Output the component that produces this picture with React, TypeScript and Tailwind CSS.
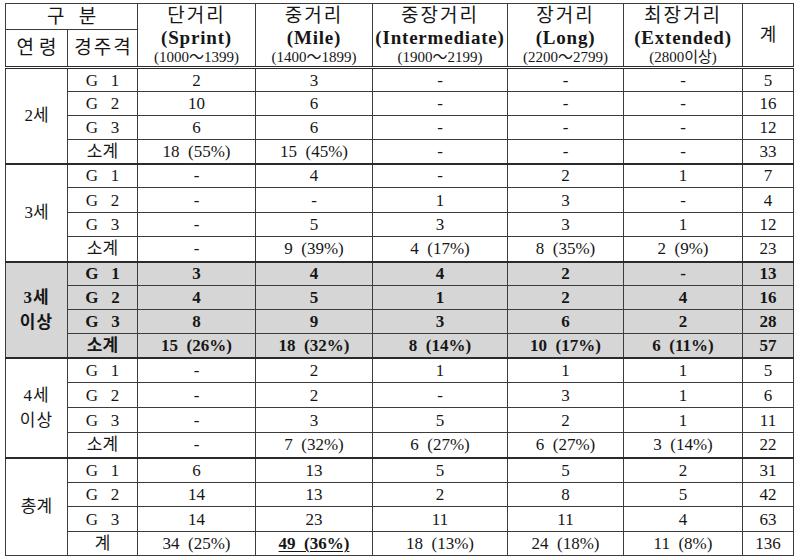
import React from "react";

type Row = { label: string; vals: string[]; total: string };
type Section = {
  age: string[];
  rows: Row[];
  heights: string[];
  bold?: boolean;
  shaded?: boolean;
};

const distances = [
  { ko: "단거리", en: "(Sprint)", range: "(1000～1399)" },
  { ko: "중거리", en: "(Mile)", range: "(1400～1899)" },
  { ko: "중장거리", en: "(Intermediate)", range: "(1900～2199)" },
  { ko: "장거리", en: "(Long)", range: "(2200～2799)" },
  { ko: "최장거리", en: "(Extended)", range: "(2800이상)" },
];

const sections: Section[] = [
  {
    age: ["2세"],
    heights: ["h-[24px]", "h-[24px]", "h-[24px]", "h-[24px]"],
    rows: [
      { label: "G   1", vals: ["2", "3", "-", "-", "-"], total: "5" },
      { label: "G   2", vals: ["10", "6", "-", "-", "-"], total: "16" },
      { label: "G   3", vals: ["6", "6", "-", "-", "-"], total: "12" },
      { label: "소계", vals: ["18  (55%)", "15  (45%)", "-", "-", "-"], total: "33" },
    ],
  },
  {
    age: ["3세"],
    heights: ["h-[24px]", "h-[25px]", "h-[24px]", "h-[25px]"],
    rows: [
      { label: "G   1", vals: ["-", "4", "-", "2", "1"], total: "7" },
      { label: "G   2", vals: ["-", "-", "1", "3", "-"], total: "4" },
      { label: "G   3", vals: ["-", "5", "3", "3", "1"], total: "12" },
      { label: "소계", vals: ["-", "9  (39%)", "4  (17%)", "8  (35%)", "2  (9%)"], total: "23" },
    ],
  },
  {
    age: ["3세", "이상"],
    bold: true,
    shaded: true,
    heights: ["h-[24px]", "h-[24px]", "h-[24px]", "h-[24px]"],
    rows: [
      { label: "G   1", vals: ["3", "4", "4", "2", "-"], total: "13" },
      { label: "G   2", vals: ["4", "5", "1", "2", "4"], total: "16" },
      { label: "G   3", vals: ["8", "9", "3", "6", "2"], total: "28" },
      { label: "소계", vals: ["15  (26%)", "18  (32%)", "8  (14%)", "10  (17%)", "6  (11%)"], total: "57" },
    ],
  },
  {
    age: ["4세", "이상"],
    heights: ["h-[25px]", "h-[25px]", "h-[25px]", "h-[25px]"],
    rows: [
      { label: "G   1", vals: ["-", "2", "1", "1", "1"], total: "5" },
      { label: "G   2", vals: ["-", "2", "-", "3", "1"], total: "6" },
      { label: "G   3", vals: ["-", "3", "5", "2", "1"], total: "11" },
      { label: "소계", vals: ["-", "7  (32%)", "6  (27%)", "6  (27%)", "3  (14%)"], total: "22" },
    ],
  },
  {
    age: ["총계"],
    heights: ["h-[25px]", "h-[24px]", "h-[25px]", "h-[24px]"],
    rows: [
      { label: "G   1", vals: ["6", "13", "5", "5", "2"], total: "31" },
      { label: "G   2", vals: ["14", "13", "2", "8", "5"], total: "42" },
      { label: "G   3", vals: ["14", "23", "11", "11", "4"], total: "63" },
      { label: "계", vals: ["34  (25%)", "49  (36%)", "18  (13%)", "24  (18%)", "11  (8%)"], total: "136" },
    ],
  },
];

const cell = "border border-[#3c3c3c] p-0 text-center align-middle whitespace-pre";

export default function App() {
  return (
    <div className="min-h-[560px] w-[800px] bg-white pl-[5px] pt-[3px] font-['Liberation_Serif','Noto_Sans_CJK_KR',serif] text-[#161616]">
      <table className="w-[788px] table-fixed border-collapse">
        <colgroup>
          <col className="w-[62px]" />
          <col className="w-[70px]" />
          <col className="w-[118px]" />
          <col className="w-[117px]" />
          <col className="w-[135px]" />
          <col className="w-[116px]" />
          <col className="w-[119px]" />
          <col className="w-[51px]" />
        </colgroup>
        <thead>
          <tr className="h-[26px]">
            <th colSpan={2} className={`${cell} text-[19px] font-normal leading-[24px]`}>
              구{"   "}분
            </th>
            {distances.map((d) => (
              <th
                key={d.ko}
                rowSpan={2}
                className={`${cell} border-b-[3px] border-b-[#2a2a2a] font-normal [border-bottom-style:double]`}
              >
                <div className="flex flex-col items-center">
                  <span className="text-[19px] leading-[23px] tracking-[2px]">{d.ko}</span>
                  <span className="text-[19px] font-bold leading-[21px] tracking-[0.8px]">{d.en}</span>
                  <span className="text-[15px] leading-[18px]">{d.range}</span>
                </div>
              </th>
            ))}
            <th
              rowSpan={2}
              className={`${cell} border-b-[3px] border-b-[#2a2a2a] text-[18px] font-normal [border-bottom-style:double]`}
            >
              계
            </th>
          </tr>
          <tr className="h-[38px]">
            <th className={`${cell} border-b-[3px] border-b-[#2a2a2a] pl-[5px] text-[19px] font-normal tracking-[5px] [border-bottom-style:double]`}>
              연령
            </th>
            <th className={`${cell} border-b-[3px] border-b-[#2a2a2a] pl-[2px] text-[19px] font-normal tracking-[2px] [border-bottom-style:double]`}>
              경주격
            </th>
          </tr>
        </thead>
        <tbody>
          {sections.map((s, si) =>
            s.rows.map((r, ri) => {
              const top = ri === 0 && si > 0 ? "border-t-2 border-t-[#2a2a2a]" : "";
              const bg = s.shaded ? "bg-[#d6d6d6]" : "";
              const weight = s.bold ? "font-bold" : "font-normal";
              return (
                <tr key={`${si}-${ri}`} className={`${s.heights[ri]} ${bg}`}>
                  {ri === 0 && (
                    <td rowSpan={4} className={`${cell} ${top} text-[17px] leading-[25px] ${s.bold ? "font-bold" : ""}`}>
                      {s.age.map((a) => (
                        <div key={a} className={s.age.length > 1 ? "tracking-[1px]" : ""}>
                          {a}
                        </div>
                      ))}
                    </td>
                  )}
                  <td className={`${cell} ${top} text-[17px] leading-none ${weight}`}>{r.label}</td>
                  {r.vals.map((v, vi) => (
                    <td key={vi} className={`${cell} ${top} text-[17px] leading-none ${weight}`}>
                      {si === 4 && ri === 3 && vi === 1 ? (
                        <span className="font-bold underline decoration-1 underline-offset-2">{v}</span>
                      ) : (
                        v
                      )}
                    </td>
                  ))}
                  <td className={`${cell} ${top} text-[17px] leading-none ${weight}`}>{r.total}</td>
                </tr>
              );
            })
          )}
        </tbody>
      </table>
    </div>
  );
}
